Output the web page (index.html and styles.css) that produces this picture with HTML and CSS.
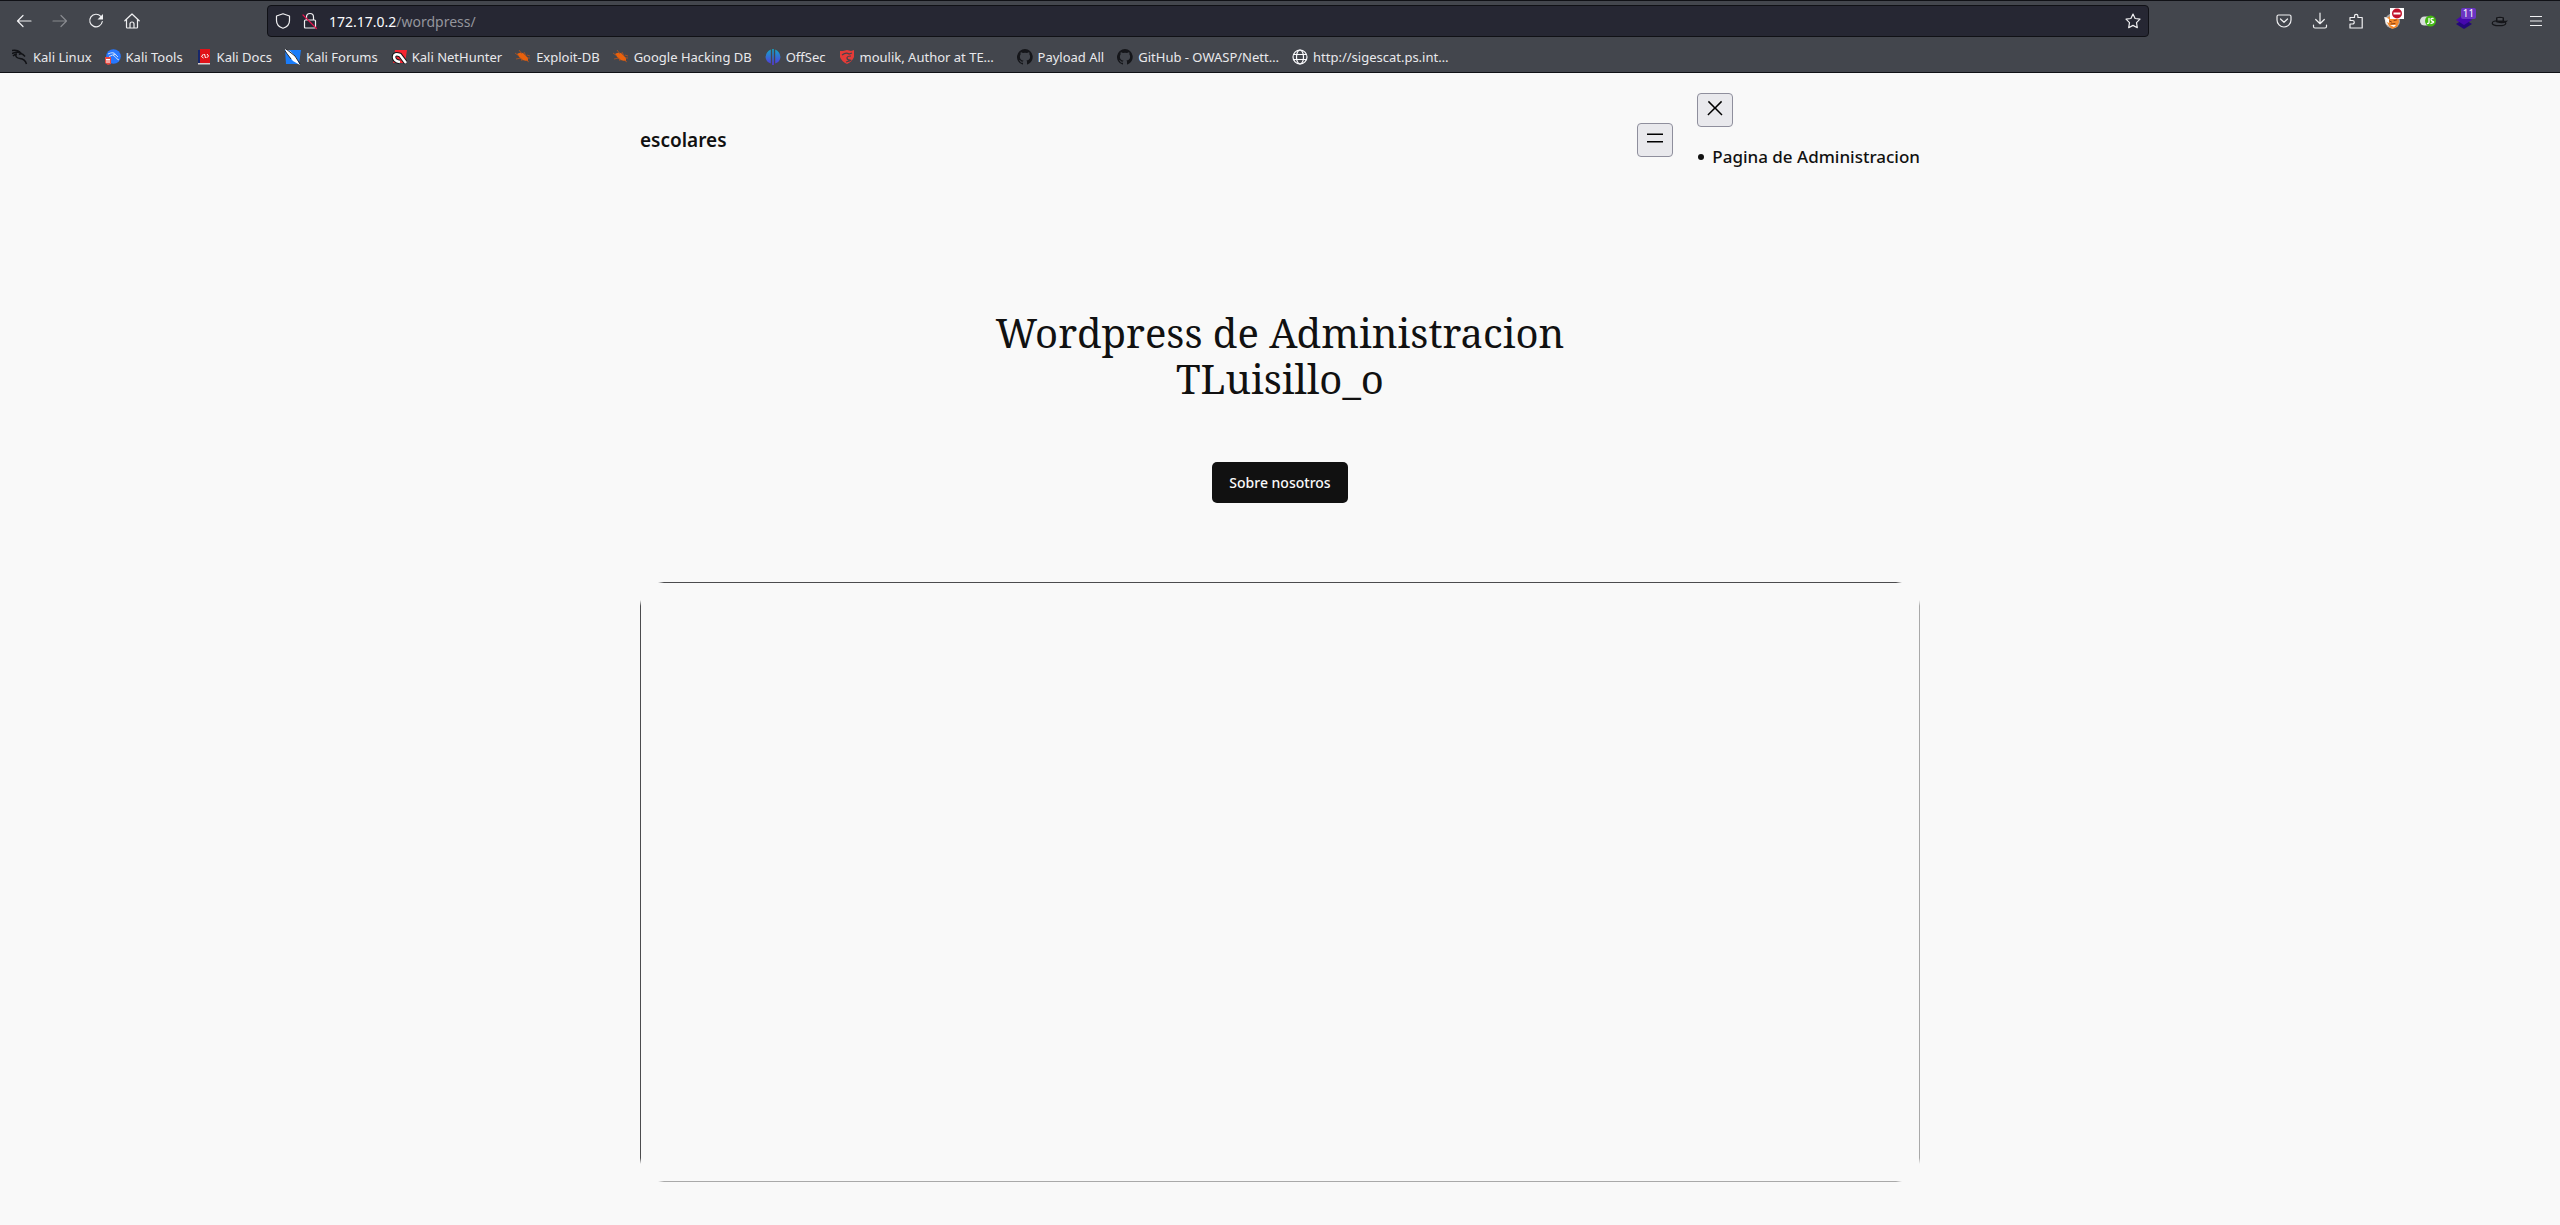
FILE: index.html
```html
<!DOCTYPE html>
<html lang="es">
<head>
<meta charset="utf-8">
<title>escolares</title>
<link rel="stylesheet" href="styles.css">
</head>
<body>
<div class="browser">
  <div class="toolbar">
    <div class="tools">
      <button class="tool" aria-label="Back"><svg class="icon" viewBox="0 0 16 16"><path d="M15 8H1.500M7 2.500 1.500 8 7 13.500"/></svg></button>
      <button class="tool tool-off" aria-label="Forward" disabled><svg class="icon" viewBox="0 0 16 16"><path d="M1 8h13.500M9 2.500 14.500 8 9 13.500"/></svg></button>
      <button class="tool" aria-label="Reload"><svg class="icon" viewBox="0 0 16 16"><path d="M12.800 3.400A6.300 6.300 0 1 0 14.300 8.500"/><path class="solid" d="M15 1v5.500H9.500z"/></svg></button>
      <button class="tool" aria-label="Home"><svg class="icon" viewBox="0 0 16 16"><path d="M.8 7.800 8 1l7.200 6.800M2.500 6.500v7.700q0 .8.8.8h9.400q.8 0 .8-.8V6.500M6 15v-4a2 2 0 0 1 4 0v4"/></svg></button>
    </div>
    <div class="address">
      <svg class="icon" viewBox="0 0 16 16"><path d="M8 .8 14.500 3v4.500c0 3.500-2.500 6.500-6.500 7.800C4 14 1.500 11 1.500 7.500V3z"/></svg>
      <svg class="icon lock" viewBox="0 0 16 16"><path d="M4.500 7V4a3.500 3.500 0 0 1 7 0v3M3.500 7h9q1 0 1 1v6q0 1-1 1h-9q-1 0-1-1V8q0-1 1-1z"/><path class="slash" d="m1 2 13.500 13.500"/></svg>
      <span class="url"><b>172.17.0.2</b>/wordpress/</span>
      <button class="star" aria-label="Bookmark"><svg class="icon" viewBox="0 0 16 16"><path d="m8 1 2.100 4.500 4.900.7-3.500 3.500.8 5L8 12.400l-4.300 2.300.8-5L1 6.200l4.900-.7z"/></svg></button>
    </div>
    <div class="tools">
      <button class="tool" aria-label="Pocket"><svg class="icon" viewBox="0 0 16 16"><path d="M2.500 2h11q1.500 0 1.500 1.500V7a7 7 0 0 1-14 0V3.500Q1 2 2.500 2zM4.500 6 8 9.300 11.500 6"/></svg></button>
      <button class="tool" aria-label="Downloads"><svg class="icon" viewBox="0 0 16 16"><path d="M8 0v10.500M3.700 6.500 8 10.700l4.300-4.200M1.500 12v1.500q0 1.500 1.500 1.500h10q1.500 0 1.500-1.500V12"/></svg></button>
      <button class="tool" aria-label="Extensions"><svg class="icon" viewBox="0 0 16 16"><path d="M2 6V4.500h4.500V3a1.700 1.700 0 0 1 3.400 0v1.500h4.300V15H2v-4h2.500a1.700 1.700 0 0 0 0-3.500H2z"/></svg></button>
      <button class="tool" aria-label="FoxyProxy"><svg class="icon art" viewBox="0 0 16 16"><circle cx="8.500" cy="8" r="7.500" fill="#a9a6a6"/><path fill="#f2ece6" d="M0 4l4 1 2 9-4-3z"/><path fill="#f58a2c" d="M3 5l5-3 6 1 1 6-2 5-5 2-3-3-2-4z"/><path fill="#fff" d="M1 4l4 2 0 4-2-1zM6 12l6 0-2 2z"/><path fill="none" stroke="#7d3510" stroke-width=".9" d="M5.500 8l2 1M10 7.500l2.500-.5M7 11l4-.5"/></svg><svg class="no-entry" viewBox="0 0 14 11"><path fill="#fff" d="M0 0h14v11H0z"/><circle cx="7" cy="5.500" r="5" fill="#c1132d"/><path fill="#fff" d="M3.500 4.500h7v2h-7z"/></svg></button>
      <button class="tool" aria-label="JavaScript toggle"><svg class="icon art" viewBox="0 0 16 16"><rect y="3.500" width="14" height="9" rx="4.500" fill="#d8dddb"/><circle cx="10.500" cy="8" r="5.500" fill="#42b812"/><path d="M9 5.500v4q0 1-1.500 1M13 5.500q-2-.5-2 1t2 2-2 2" fill="none" stroke="#fff" stroke-width="1.300"/></svg></button>
      <button class="tool" aria-label="Wappalyzer"><svg class="icon art" viewBox="0 0 16 16"><path fill="#24077c" d="m0 11 8-5 8 5-8 5z"/><path fill="#4608ad" d="m0 7 8-6 8 6-8 5z"/></svg><span class="badge">11</span></button>
      <button class="tool" aria-label="Hat"><svg class="icon art" viewBox="0 0 16 16"><ellipse cx="7" cy="10.200" rx="6.800" ry="2.500" fill="none" stroke="#15161a"/><path fill="#15161a" d="M4 9V4.500q4-1.500 8 0V8l4-.5q-3 4-11 2z"/><path fill="#4c4e54" d="M5.500 5h5v2.500h-5z"/></svg></button>
      <button class="tool" aria-label="Menu"><svg class="icon menu" viewBox="0 0 16 16"><path d="M2 3.500h12M2 8h12M2 12.500h12"/></svg></button>
    </div>
  </div>
  <nav class="bookmarks">
    <a href="#"><svg viewBox="0 0 16 16"><path fill="none" stroke="#111216" stroke-width="1.500" d="M0 1.500q5-1 8 1.500M0 4.500q4-2 8-1l4 3M4 5q-1 4 4 4.500t6.500 5.500M7 5.500q3-2 6 2M1 7q2-2 4-2"/></svg>Kali Linux</a>
    <a href="#"><svg viewBox="0 0 16 16"><circle cx="8.500" cy="7.500" r="7.300" fill="#2777ff"/><path fill="none" stroke="#c9defc" d="M3 5q6-3 8 1M4 7.500q4-3 6 0t4 3.500M8 5q3 0 5 3"/><path fill="#e8483f" d="M0 8h6v7l-3 1-3-2z"/><path fill="none" stroke="#fff" d="M1 10.500h4M2 11v3M4 11v3"/></svg>Kali Tools</a>
    <a href="#"><svg viewBox="0 0 16 16"><path fill="#17276a" d="M2 1h3v14H2z"/><path fill="#e01218" d="M4 0h10v14H4z"/><path fill="#d9d1d1" d="M2 14h12v1.500H2z"/><path fill="none" stroke="#fff" d="M7.500 5 5.500 7.500l2 1.500M11 5l1.500 2-2 2M8.500 5l1 4"/></svg>Kali Docs</a>
    <a href="#"><svg viewBox="0 0 16 16"><path fill="#1a7cf9" d="M0 1h16l-2 14H1z"/><path fill="#fff" d="M0 0l5 2 6 6 4 8-7-4-6-7z"/><path fill="none" stroke="#17191e" stroke-width=".9" d="M1 0l9 7 5 8M0 2l6 8"/></svg>Kali Forums</a>
    <a href="#"><svg viewBox="0 0 16 16"><path fill="#f52531" d="M4 1h12l-2 13H2z"/><path fill="none" stroke="#15161a" stroke-width="4.500" d="M15 14 9 6q-6-2-6 2t6 5"/><path fill="none" stroke="#fff" stroke-width="2.500" d="M15 14 9 6q-6-2-6 2t6 5"/></svg>Kali NetHunter</a>
    <a href="#"><svg viewBox="0 0 16 16"><path fill="#e9610c" d="M2 5q3-2 6-1l5 5v3q-5 0-8-3z"/><path fill="none" stroke="#b55320" stroke-width=".8" d="M0 4l4 3M1 10l5-1M4 1l3 4M9 3l2 4M12 6l3 1M12 9l3 0M11 11l3 2M6 9l1 3"/></svg>Exploit-DB</a>
    <a href="#"><svg viewBox="0 0 16 16"><path fill="#e9610c" d="M2 5q3-2 6-1l5 5v3q-5 0-8-3z"/><path fill="none" stroke="#b55320" stroke-width=".8" d="M0 4l4 3M1 10l5-1M4 1l3 4M9 3l2 4M12 6l3 1M12 9l3 0M11 11l3 2M6 9l1 3"/></svg>Google Hacking DB</a>
    <a href="#"><svg viewBox="0 0 16 16"><defs><linearGradient id="sea" x2="0" y2="1"><stop stop-color="#12a7c7"/><stop offset="1" stop-color="#5634df"/></linearGradient></defs><path fill="url(#sea)" d="M5.800.5v14Q1 13 .5 8 1 2.500 5.800.5zM7.200 0h1.600v16H7.200zM10.200.5Q15 2.500 15.500 8 15 13 10.200 14.500z"/></svg>OffSec</a>
    <a href="#"><svg viewBox="0 0 16 16"><path fill="#e63b38" d="m1 2 3 0 4-1 4 1 3-1v7q-2 5-7 7-5-2-7-7z"/><path fill="none" stroke="#46444b" stroke-width="1.200" d="M3 6q4-3 7-1l3-1M12 7q-4 0-4 2t3 2-4 2"/></svg><span class="clip">moulik, Author at TE…</span></a>
    <a href="#"><svg viewBox="0 0 16 16"><path fill="#15161a" d="M8 0a8 8 0 0 0-2.500 15.600c.4.100.5-.2.500-.4v-1.500c-2.200.5-2.700-1-2.700-1-.4-.9-.9-1.200-.9-1.200-.7-.5.100-.5.100-.5.8.1 1.200.8 1.200.8.700 1.200 1.900.9 2.300.7.100-.5.300-.9.500-1.100-1.800-.2-3.600-.9-3.600-4 0-.9.300-1.600.8-2.100-.1-.2-.4-1 .1-2.100 0 0 .7-.2 2.200.8a7.600 7.600 0 0 1 4 0c1.500-1 2.200-.8 2.200-.8.4 1.100.2 1.900.1 2.100.5.600.8 1.300.8 2.100 0 3.100-1.900 3.700-3.700 3.900.3.300.6.800.6 1.500v2.300c0 .2.100.5.500.4A8 8 0 0 0 8 0z"/></svg>Payload All</a>
    <a href="#"><svg viewBox="0 0 16 16"><path fill="#15161a" d="M8 0a8 8 0 0 0-2.500 15.600c.4.100.5-.2.500-.4v-1.500c-2.200.5-2.700-1-2.700-1-.4-.9-.9-1.200-.9-1.200-.7-.5.100-.5.100-.5.8.1 1.200.8 1.200.8.700 1.200 1.900.9 2.300.7.100-.5.300-.9.500-1.100-1.800-.2-3.600-.9-3.600-4 0-.9.300-1.600.8-2.100-.1-.2-.4-1 .1-2.100 0 0 .7-.2 2.200.8a7.600 7.600 0 0 1 4 0c1.500-1 2.200-.8 2.200-.8.4 1.100.2 1.900.1 2.100.5.600.8 1.300.8 2.100 0 3.100-1.900 3.700-3.700 3.900.3.300.6.800.6 1.500v2.300c0 .2.100.5.500.4A8 8 0 0 0 8 0z"/></svg>GitHub - OWASP/Nett…</a>
    <a href="#"><svg viewBox="0 0 16 16"><g fill="none" stroke="#fbfbfe" stroke-width="1.200"><circle cx="8" cy="8" r="7"/><ellipse cx="8" cy="8" rx="3.500" ry="7"/><path d="M1.500 5.500h13M1.500 10.500h13"/></g></svg>http://sigescat.ps.int…</a>
  </nav>
</div>

<div class="page">
  <header class="site-header">
    <a class="site-title" href="#">escolares</a>
    <nav class="site-nav">
      <button class="nav-button" aria-label="Abrir el menú"><svg viewBox="0 0 24 24"><path d="M4 7.500h16V9H4zM4 15h16v1.500H4z"/></svg></button>
      <div class="nav-panel">
        <button class="nav-button" aria-label="Cerrar el menú"><svg viewBox="0 0 24 24"><path d="m13.100 12 6-6.100-1-1.100-6.100 6.100-6.100-6.100-1 1.100 6 6.100-6.500 6.500 1 1 6.600-6.500 6.500 6.500 1-1z"/></svg></button>
        <ul class="nav-list"><li><a href="#">Pagina de Administracion</a></li></ul>
      </div>
    </nav>
  </header>
  <main>
    <section class="hero">
      <h1>Wordpress de Administracion TLuisillo_o</h1>
      <a class="cta" href="#">Sobre nosotros</a>
    </section>
    <figure class="picture"></figure>
  </main>
</div>
</body>
</html>
```
FILE: styles.css
```css
* { box-sizing: border-box; }

body {
  margin: 0;
  background: #f9f9f9;
  color: #111;
  font-family: "Noto Sans", sans-serif;
}

a { color: inherit; text-decoration: none; }
button { padding: 0; border: 0; background: none; color: inherit; font: inherit; }

/* Browser chrome */
.browser {
  border-top: 1px solid #101116;
  border-bottom: 1px solid #101116;
  background: #43464d;
  color: #e9e9ec;
}

.toolbar {
  display: flex;
  align-items: center;
  justify-content: space-between;
  height: 40px;
  padding: 0 6px;
}

.tools { display: flex; }

.tool {
  position: relative;
  display: flex;
  align-items: center;
  justify-content: center;
  width: 36px;
  height: 32px;
}

.tool-off { opacity: .4; }

.icon {
  width: 16px;
  height: 16px;
  fill: none;
  stroke: #f0f0f2;
  stroke-width: 1.2;
  stroke-linecap: round;
  stroke-linejoin: round;
  overflow: visible;
}

.icon .solid { fill: #f0f0f2; stroke: none; }
.icon .slash { stroke: #e2134d; }
.art { stroke: none; }
.menu { stroke-linecap: butt; }

.no-entry { position: absolute; top: 3px; right: 6px; width: 14px; height: 11px; }

.badge {
  position: absolute;
  top: 3px;
  right: 6px;
  width: 15px;
  border-radius: 2px;
  background: #6a35c2;
  color: #fff;
  font-size: 10px;
  line-height: 11px;
  text-align: center;
}

.address {
  display: flex;
  align-items: center;
  gap: 11px;
  flex: 1;
  height: 32px;
  margin: 0 117px;
  padding: 0 7px;
  border: 1px solid #101116;
  border-radius: 4px;
  background: #262733;
}

.url { flex: 1; color: #94959c; font-size: 14px; }
.url b { color: #fbfbfe; font-weight: 400; }
.star { display: flex; }

.bookmarks {
  display: flex;
  align-items: center;
  gap: 13px;
  height: 31px;
  padding: 1px 12px 0;
  font-size: 13px;
}

.bookmarks a { display: flex; align-items: center; gap: 5px; white-space: nowrap; }
.bookmarks svg { width: 16px; height: 16px; }
.clip { width: 144px; }

/* Site */
.page {
  max-width: 1280px;
  margin: 0 auto;
  padding: 20px 0 43px;
}

.site-header { display: flex; align-items: center; justify-content: space-between; }
.site-title { font-size: 19px; font-weight: 600; }
.site-nav { display: flex; align-items: center; gap: 24px; }

.nav-button {
  display: flex;
  justify-content: center;
  width: 36px;
  height: 34px;
  padding-top: 2px;
  border: 1px solid #8f8f9d;
  border-radius: 4px;
  background: #e9e9ed;
}

.nav-button svg { width: 24px; height: 24px; }

.nav-list {
  margin: 16px 0;
  padding: 0 0 0 1px;
  list-style: none;
  font-size: 17px;
  font-weight: 500;
  line-height: 28px;
}

.nav-list li { display: flex; align-items: center; gap: 8px; }

.nav-list li::before {
  width: 6px;
  height: 6px;
  border-radius: 50%;
  background: #111;
  content: "";
}

.hero {
  display: flex;
  flex-direction: column;
  align-items: center;
  gap: 60px;
  padding: 123px 0 79px;
}

h1 {
  max-width: 620px;
  margin: 0;
  font-family: "Noto Serif", "Liberation Serif", serif;
  font-size: 40px;
  font-weight: 400;
  line-height: 46px;
  text-align: center;
}

.cta {
  padding: 0 17px;
  border-radius: 5px;
  background: #111;
  color: #f9f9f9;
  font-size: 14px;
  font-weight: 500;
  line-height: 41px;
}

/* Empty picture: hairline edges that stop short of the rounded corners */
.picture {
  aspect-ratio: 32 / 15;
  margin: 0;
  background:
    linear-gradient(90deg, transparent 18px, #4c4c4e 24px calc(100% - 24px), transparent calc(100% - 18px)) top / 100% 1px no-repeat,
    linear-gradient(90deg, transparent 18px, #a9a9a9 24px calc(100% - 24px), transparent calc(100% - 18px)) bottom / 100% 1px no-repeat,
    linear-gradient(transparent 18px, #4c4c4e 24px calc(100% - 24px), transparent calc(100% - 18px)) left / 1px 100% no-repeat,
    linear-gradient(transparent 18px, #a9a9a9 24px calc(100% - 24px), transparent calc(100% - 18px)) right / 1px 100% no-repeat;
}
```
